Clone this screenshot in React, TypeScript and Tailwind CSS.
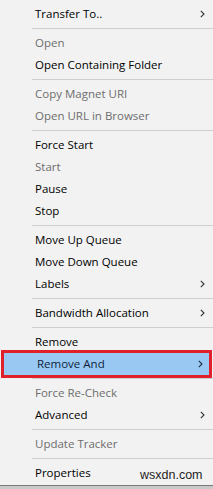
import React from "react";

type Item = { label: string; disabled?: boolean; sub?: boolean; hl?: boolean } | "sep";

const items: Item[] = [
  { label: "Transfer To..", sub: true },
  "sep",
  { label: "Open", disabled: true },
  { label: "Open Containing Folder" },
  "sep",
  { label: "Copy Magnet URI", disabled: true },
  { label: "Open URL in Browser", disabled: true },
  "sep",
  { label: "Force Start" },
  { label: "Start", disabled: true },
  { label: "Pause" },
  { label: "Stop" },
  "sep",
  { label: "Move Up Queue" },
  { label: "Move Down Queue" },
  { label: "Labels", sub: true },
  "sep",
  { label: "Bandwidth Allocation", sub: true },
  "sep",
  { label: "Remove" },
  { label: "Remove And", sub: true, hl: true },
  "sep",
  { label: "Force Re-Check", disabled: true },
  { label: "Advanced", sub: true },
  "sep",
  { label: "Update Tracker", disabled: true },
  "sep",
  { label: "Properties" },
];

function Chevron({ color }: { color: string }) {
  return (
    <svg width="5" height="8" viewBox="0 0 5 8" className="shrink-0">
      <polyline points="0.8,0.8 4,4 0.8,7.2" fill="none" stroke={color} strokeWidth="1.1" />
    </svg>
  );
}

export default function App() {
  return (
    <div
      className="w-[213px] h-[489px] overflow-hidden bg-[#f2f2f2] relative flex flex-col"
      style={{ fontFamily: '"Open Sans", "Noto Sans", sans-serif' }}
    >
      <div className="flex flex-col pt-[3px] h-[485px]">
        {items.map((it, i) =>
          it === "sep" ? (
            <div key={i} className="h-[7px] flex items-center pl-[32px]">
              <div className="h-px w-full bg-[#cfcfcf]" />
            </div>
          ) : (
            <div
              key={i}
              className={
                "relative h-[22px] flex items-center justify-between pl-[35px] pr-[8px] text-[11.5px] leading-none " +
                (it.hl
                  ? "bg-[#99c9f3] text-[#0f1f3a] mx-[2px] pl-[33px] pr-[6px]"
                  : it.disabled
                  ? "text-[#6d6d6d]"
                  : "text-black")
              }
            >
              <span className="-mt-[1px]">{it.label}</span>
              {it.sub && <Chevron color={it.hl ? "#1d2b45" : "#333"} />}
              {it.hl && (
                <span className="absolute -left-[1px] -right-[1px] -top-[3px] -bottom-[3px] border-[3px] border-[#e0202a]" />
              )}
            </div>
          )
        )}
      </div>
      <div className="h-px bg-[#7a7a7a]" />
      <div className="h-[3px] bg-[#c9c9c9]" />
      <span
        className="absolute left-[140px] top-[469px] text-[12.5px] text-[#1e1e1e] leading-none"
        style={{ fontFamily: '"Liberation Sans", Arial, sans-serif' }}
      >
        wsxdn.com
      </span>
    </div>
  );
}
